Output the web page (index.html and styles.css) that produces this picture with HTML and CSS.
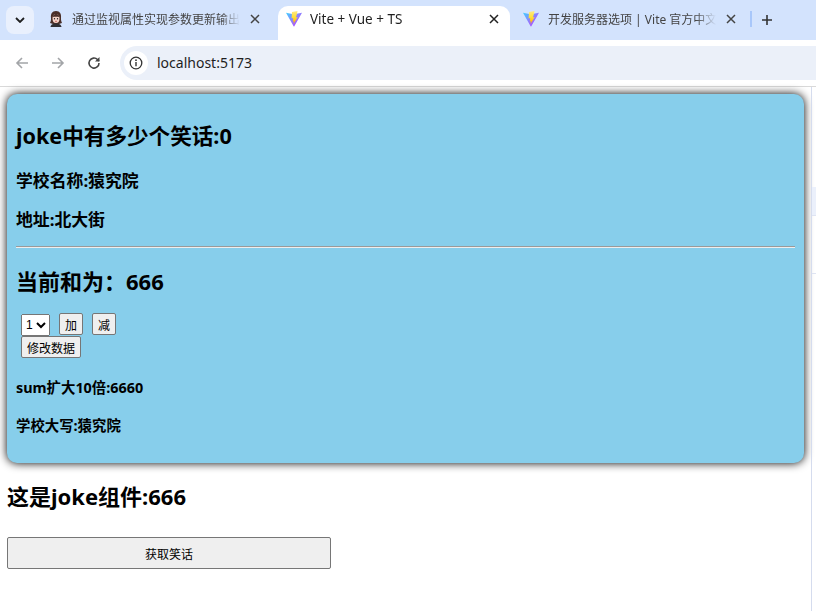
FILE: index.html
```html
<!DOCTYPE html>
<html lang="zh">
<head>
<meta charset="utf-8">
<title>Vite + Vue + TS</title>
<link rel="stylesheet" href="styles.css">
</head>
<body>
<svg class="defs" width="0" height="0" aria-hidden="true">
  <defs>
    <linearGradient id="vp" x1="0" y1="0" x2="1" y2="1"><stop offset="0" stop-color="#41d1ff"/><stop offset=".5" stop-color="#8f7cff"/><stop offset="1" stop-color="#bd34fe"/></linearGradient>
    <linearGradient id="vy" x1="0" y1="0" x2="0" y2="1"><stop offset="0" stop-color="#ffea83"/><stop offset=".5" stop-color="#ffdd35"/><stop offset="1" stop-color="#ffa800"/></linearGradient>
  </defs>
</svg>
<header class="chrome">
  <div class="tabstrip">
    <button class="tabs-menu"><svg width="10" height="6" viewBox="0 0 10 6"><path d="M1 1l4 4 4-4" fill="none" stroke="#1f1f1f" stroke-width="1.800"/></svg></button>
    <div class="tab tab-first">
      <svg class="fav" width="14" height="16" viewBox="0 0 14 16"><path d="M7 0C3 0 1.500 3 2 7c.2 2-.5 4-1 5l3 1h6l3-1c-.5-1-1.200-3-1-5 .5-4-1-7-5-7z" fill="#4a2f28"/><ellipse cx="7" cy="7.500" rx="3.500" ry="4.500" fill="#f5d4c8"/><path d="M3.500 6C4 3.500 6 3 7.500 3c1.500.3 2.800 1.300 3 3-2-.2-4.500-.5-7 0z" fill="#4a2f28"/><path d="M1.500 16c.5-3 3-3.500 5.500-3.500s5 .5 5.500 3.500z" fill="#2f2f33"/><circle cx="5.500" cy="7.800" r=".7" fill="#222"/><circle cx="8.500" cy="7.800" r=".7" fill="#222"/><path d="M6 10.300h2" stroke="#c0504d" stroke-width=".8"/></svg>
      <span class="tab-title">通过监视属性实现参数更新输出</span>
      <svg class="close" width="10" height="10" viewBox="0 0 10 10"><path d="M1 1l8 8M9 1l-8 8" stroke="#444" stroke-width="1.500"/></svg>
    </div>
    <div class="tab tab-active">
      <svg class="fav" width="16" height="16" viewBox="0 0 16 16"><path d="M0 1.800L7.500 3.200a1 1 0 0 0 .4 0L16 1.800 8.300 15.300a.4.4 0 0 1-.7 0z" fill="url(#vp)"/><path d="M11.500 0L6 1l-.4 6.500L7.200 7l-.4 3.500 1.100-.3-.4 2.800L11.800 6l-1.900.4L11 2.800z" fill="url(#vy)"/></svg>
      <span class="tab-title tab-title-active">Vite + Vue + TS</span>
      <svg class="close" width="10" height="10" viewBox="0 0 10 10"><path d="M1 1l8 8M9 1l-8 8" stroke="#222" stroke-width="1.500"/></svg>
    </div>
    <div class="tab tab-last">
      <svg class="fav" width="16" height="16" viewBox="0 0 16 16"><path d="M0 1.800L7.500 3.200a1 1 0 0 0 .4 0L16 1.800 8.300 15.300a.4.4 0 0 1-.7 0z" fill="url(#vp)"/><path d="M11.500 0L6 1l-.4 6.500L7.200 7l-.4 3.500 1.100-.3-.4 2.800L11.800 6l-1.900.4L11 2.800z" fill="url(#vy)"/></svg>
      <span class="tab-title">开发服务器选项 | Vite 官方中文</span>
      <svg class="close" width="10" height="10" viewBox="0 0 10 10"><path d="M1 1l8 8M9 1l-8 8" stroke="#444" stroke-width="1.500"/></svg>
    </div>
    <span class="tab-sep"></span>
    <svg class="plus" width="12" height="12" viewBox="0 0 12 12"><path d="M6 1v10M1 6h10" stroke="#333" stroke-width="1.600"/></svg>
  </div>
  <div class="toolbar">
    <svg class="nav-icon" width="16" height="16" viewBox="0 0 16 16"><path d="M14 8H3M8 3L3 8l5 5" fill="none" stroke="#a3a5a8" stroke-width="1.600"/></svg>
    <svg class="nav-icon" width="16" height="16" viewBox="0 0 16 16"><path d="M2 8h11M8 3l5 5-5 5" fill="none" stroke="#a3a5a8" stroke-width="1.600"/></svg>
    <svg class="nav-icon" width="16" height="16" viewBox="0 0 16 16"><path d="M13 8a5 5 0 1 1-1.500-3.500L13 6" fill="none" stroke="#444" stroke-width="1.600"/><path d="M13.500 2v4.500H9z" fill="#444"/></svg>
    <div class="omnibox">
      <span class="info"><svg width="14" height="14" viewBox="0 0 14 14"><circle cx="7" cy="7" r="5.800" fill="none" stroke="#333" stroke-width="1.300"/><path d="M7 6v4.200" stroke="#333" stroke-width="1.400"/><circle cx="7" cy="4.200" r=".9" fill="#333"/></svg></span>
      <span class="url">localhost:5173</span>
    </div>
  </div>
</header>
<div class="viewport">
  <main class="page">
    <section class="card">
      <h2 class="count">joke中有多少个笑话:0</h2>
      <h3 class="info-line">学校名称:猿究院</h3>
      <h3 class="info-line">地址:北大街</h3>
      <hr class="rule">
      <h2 class="sum">当前和为：666</h2>
      <div class="controls">
        <div class="control-row">
          <select class="picker"><option>1</option><option>2</option><option>3</option></select>
          <button class="btn">加</button>
          <button class="btn">减</button>
        </div>
        <div class="control-row">
          <button class="btn">修改数据</button>
        </div>
      </div>
      <h4 class="calc">sum扩大10倍:6660</h4>
      <h4 class="calc">学校大写:猿究院</h4>
    </section>
    <h2 class="joke-title">这是joke组件:666</h2>
    <button class="fetch">获取笑话</button>
  </main>
  <aside class="devtools">
    <div class="dt-a"></div>
    <div class="dt-b"></div>
    <div class="dt-c"></div>
  </aside>
</div>
</body>
</html>
```
FILE: styles.css
```css
* { box-sizing: border-box; }
html, body { margin: 0; height: 100%; overflow: hidden; }
body { width: 816px; height: 611px; background: #fff; font-family: "Noto Sans", "Noto Sans CJK SC", sans-serif; display: flex; flex-direction: column; }
.defs { position: absolute; }
.chrome { height: 87px; flex: none; background: #fff; border-bottom: 1px solid #d9d9d9; font-family: "Noto Sans", "Noto Sans CJK SC", sans-serif; }
.tabstrip { height: 40px; background: #d3e3fd; display: flex; align-items: flex-start; padding-top: 6px; padding-left: 6px; }
.tabs-menu { width: 28px; height: 28px; border: 0; border-radius: 8px; background: #e9f0fd; padding: 0; display: flex; align-items: center; justify-content: center; flex: none; }
.tab { height: 34px; display: flex; align-items: center; flex: none; padding-bottom: 8px; font-size: 12px; color: #444; }
.tab-first { width: 244px; padding-left: 15px; }
.tab-active { width: 232px; background: #fff; border-radius: 10px 10px 0 0; padding-left: 8px; color: #1f1f1f; font-size: 13.5px; }
.tab-last { width: 240px; padding-left: 13px; }
.fav { flex: none; }
.tab-title { flex: none; margin-left: 9px; white-space: nowrap; overflow: hidden; width: 168px; -webkit-mask-image: linear-gradient(90deg, #000 88%, transparent); mask-image: linear-gradient(90deg, #000 88%, transparent); }
.tab-first .tab-title { margin-left: 9px; }
.tab-title-active { width: 175px; margin-left: 8px; }
.close { flex: none; margin-left: 10px; }
.tab-active .close { margin-left: 4px; }
.tab-sep { width: 2px; height: 16px; margin-top: 5px; background: #a8c7fa; flex: none; }
.plus { margin: 8px 0 0 9px; flex: none; }
.toolbar { height: 46px; display: flex; align-items: center; padding-left: 14px; background: #fff; }
.nav-icon { flex: none; margin-right: 20px; }
.omnibox { flex: 1; height: 34px; margin-left: -2px; margin-top: -1px; background: #ebf0f9; border-radius: 17px 0 0 17px; display: flex; align-items: center; padding-left: 4px; }
.info { width: 24px; height: 24px; border-radius: 50%; background: #fff; display: flex; align-items: center; justify-content: center; }
.url { margin-left: 9px; font-size: 14px; color: #1f1f1f; }
.viewport { flex: 1; display: flex; min-height: 0; }
.page { width: 811px; flex: none; padding: 7px 0 0 7px; }
.card { width: 797px; height: 369px; background: skyblue; border-radius: 10px; box-shadow: 0 0 10px #000; padding: 10px 9px 0 9px; }
.count { margin: 15px 0 0; font-size: 21.6px; line-height: 34px; font-weight: 700; }
.info-line { margin: 16px 0 0; font-size: 16.85px; line-height: 23px; font-weight: 700; }
.rule { margin: 15px 0 0; height: 2px; border: 0; border-top: 1px solid #9a9a9a; border-bottom: 1px solid #eee; }
.sum { margin: 16px 0 0; font-size: 22px; line-height: 34px; font-weight: 700; }
.controls { margin-top: 15px; padding-left: 5px; display: flex; flex-direction: column; gap: 1px; }
.control-row { display: flex; align-items: center; gap: 9px; height: 22px; }
.picker { width: 29px; height: 22px; font: 12px "Liberation Sans", sans-serif; padding: 0; margin-top: 1px; }
.btn { height: 22px; padding: 0 5px; font: 12px "Noto Sans CJK SC", sans-serif; background: #efefef; border: 1px solid #767676; border-radius: 2px; }
.calc { margin: 0; font-size: 14.4px; line-height: 20px; font-weight: 700; }
.controls + .calc { margin-top: 20px; }
.calc + .calc { margin-top: 18px; }
.joke-title { margin: 16px 0 0; font-size: 22px; line-height: 34px; font-weight: 700; }
.fetch { display: block; width: 324px; height: 32px; margin-top: 24px; font: 12px "Noto Sans CJK SC", sans-serif; background: #efefef; border: 1px solid #767676; border-radius: 2px; }
.devtools { flex: 1; border-left: 1px solid #d5dcee; display: flex; flex-direction: column; }
.dt-a { height: 100px; }
.dt-b { height: 29px; background: #ebf0fb; border-bottom: 1px solid #dfe4f2; }
.dt-c { height: 58px; border-bottom: 1px solid #dfe4f2; }
```
